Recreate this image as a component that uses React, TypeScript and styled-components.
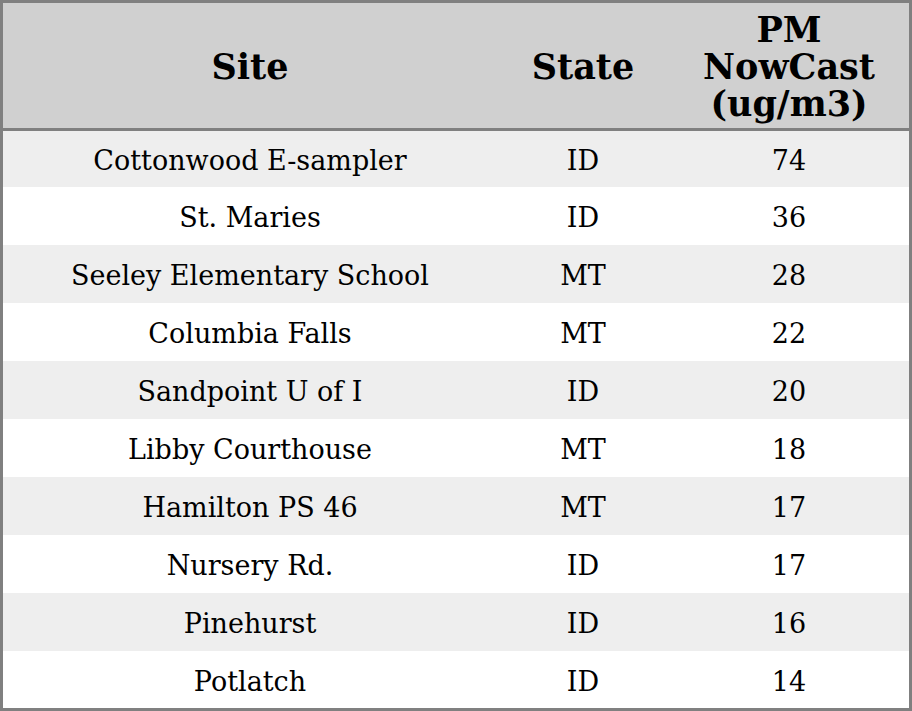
import React from "react";
import styled, { createGlobalStyle } from "styled-components";

const Global = createGlobalStyle`
  html, body { margin: 0; padding: 0; background: #ffffff; }
  body { font-family: "DejaVu Serif", serif; }
`;

const Table = styled.table`
  width: 912px;
  border-collapse: collapse;
  border: 3px solid #808080;
  font-family: "DejaVu Serif", serif;
  color: #000;
  table-layout: fixed;
`;

const HeadRow = styled.tr`
  background: #d0d0d0;
  border-bottom: 3px solid #808080;
`;

const Th = styled.th<{ $w: number }>`
  width: ${(p) => p.$w}px;
  height: 123px;
  padding: 2px 0 0;
  font-size: 35px;
  font-weight: bold;
  line-height: 37px;
  text-align: center;
  vertical-align: middle;
`;

const Row = styled.tr<{ $striped: boolean }>`
  background: ${(p) => (p.$striped ? "#eeeeee" : "#ffffff")};
`;

const Td = styled.td<{ $h: number }>`
  height: ${(p) => p.$h - 4}px;
  padding: 4px 0 0;
  font-size: 27px;
  line-height: 32px;
  text-align: center;
  vertical-align: middle;
`;

const rows: [string, string, number][] = [
  ["Cottonwood E-sampler", "ID", 74],
  ["St. Maries", "ID", 36],
  ["Seeley Elementary School", "MT", 28],
  ["Columbia Falls", "MT", 22],
  ["Sandpoint U of I", "ID", 20],
  ["Libby Courthouse", "MT", 18],
  ["Hamilton PS 46", "MT", 17],
  ["Nursery Rd.", "ID", 17],
  ["Pinehurst", "ID", 16],
  ["Potlatch", "ID", 14],
];

export default function App() {
  return (
    <>
      <Global />
      <Table>
        <thead>
          <HeadRow>
            <Th $w={494}>Site</Th>
            <Th $w={172}>State</Th>
            <Th $w={240}>
              PM
              <br />
              NowCast
              <br />
              (ug/m3)
            </Th>
          </HeadRow>
        </thead>
        <tbody>
          {rows.map(([site, st, v], i) => {
            const h = i === 0 ? 56 : i === rows.length - 1 ? 57 : 58;
            return (
              <Row key={i} $striped={i % 2 === 0}>
                <Td $h={h}>{site}</Td>
                <Td $h={h}>{st}</Td>
                <Td $h={h}>{v}</Td>
              </Row>
            );
          })}
        </tbody>
      </Table>
    </>
  );
}
